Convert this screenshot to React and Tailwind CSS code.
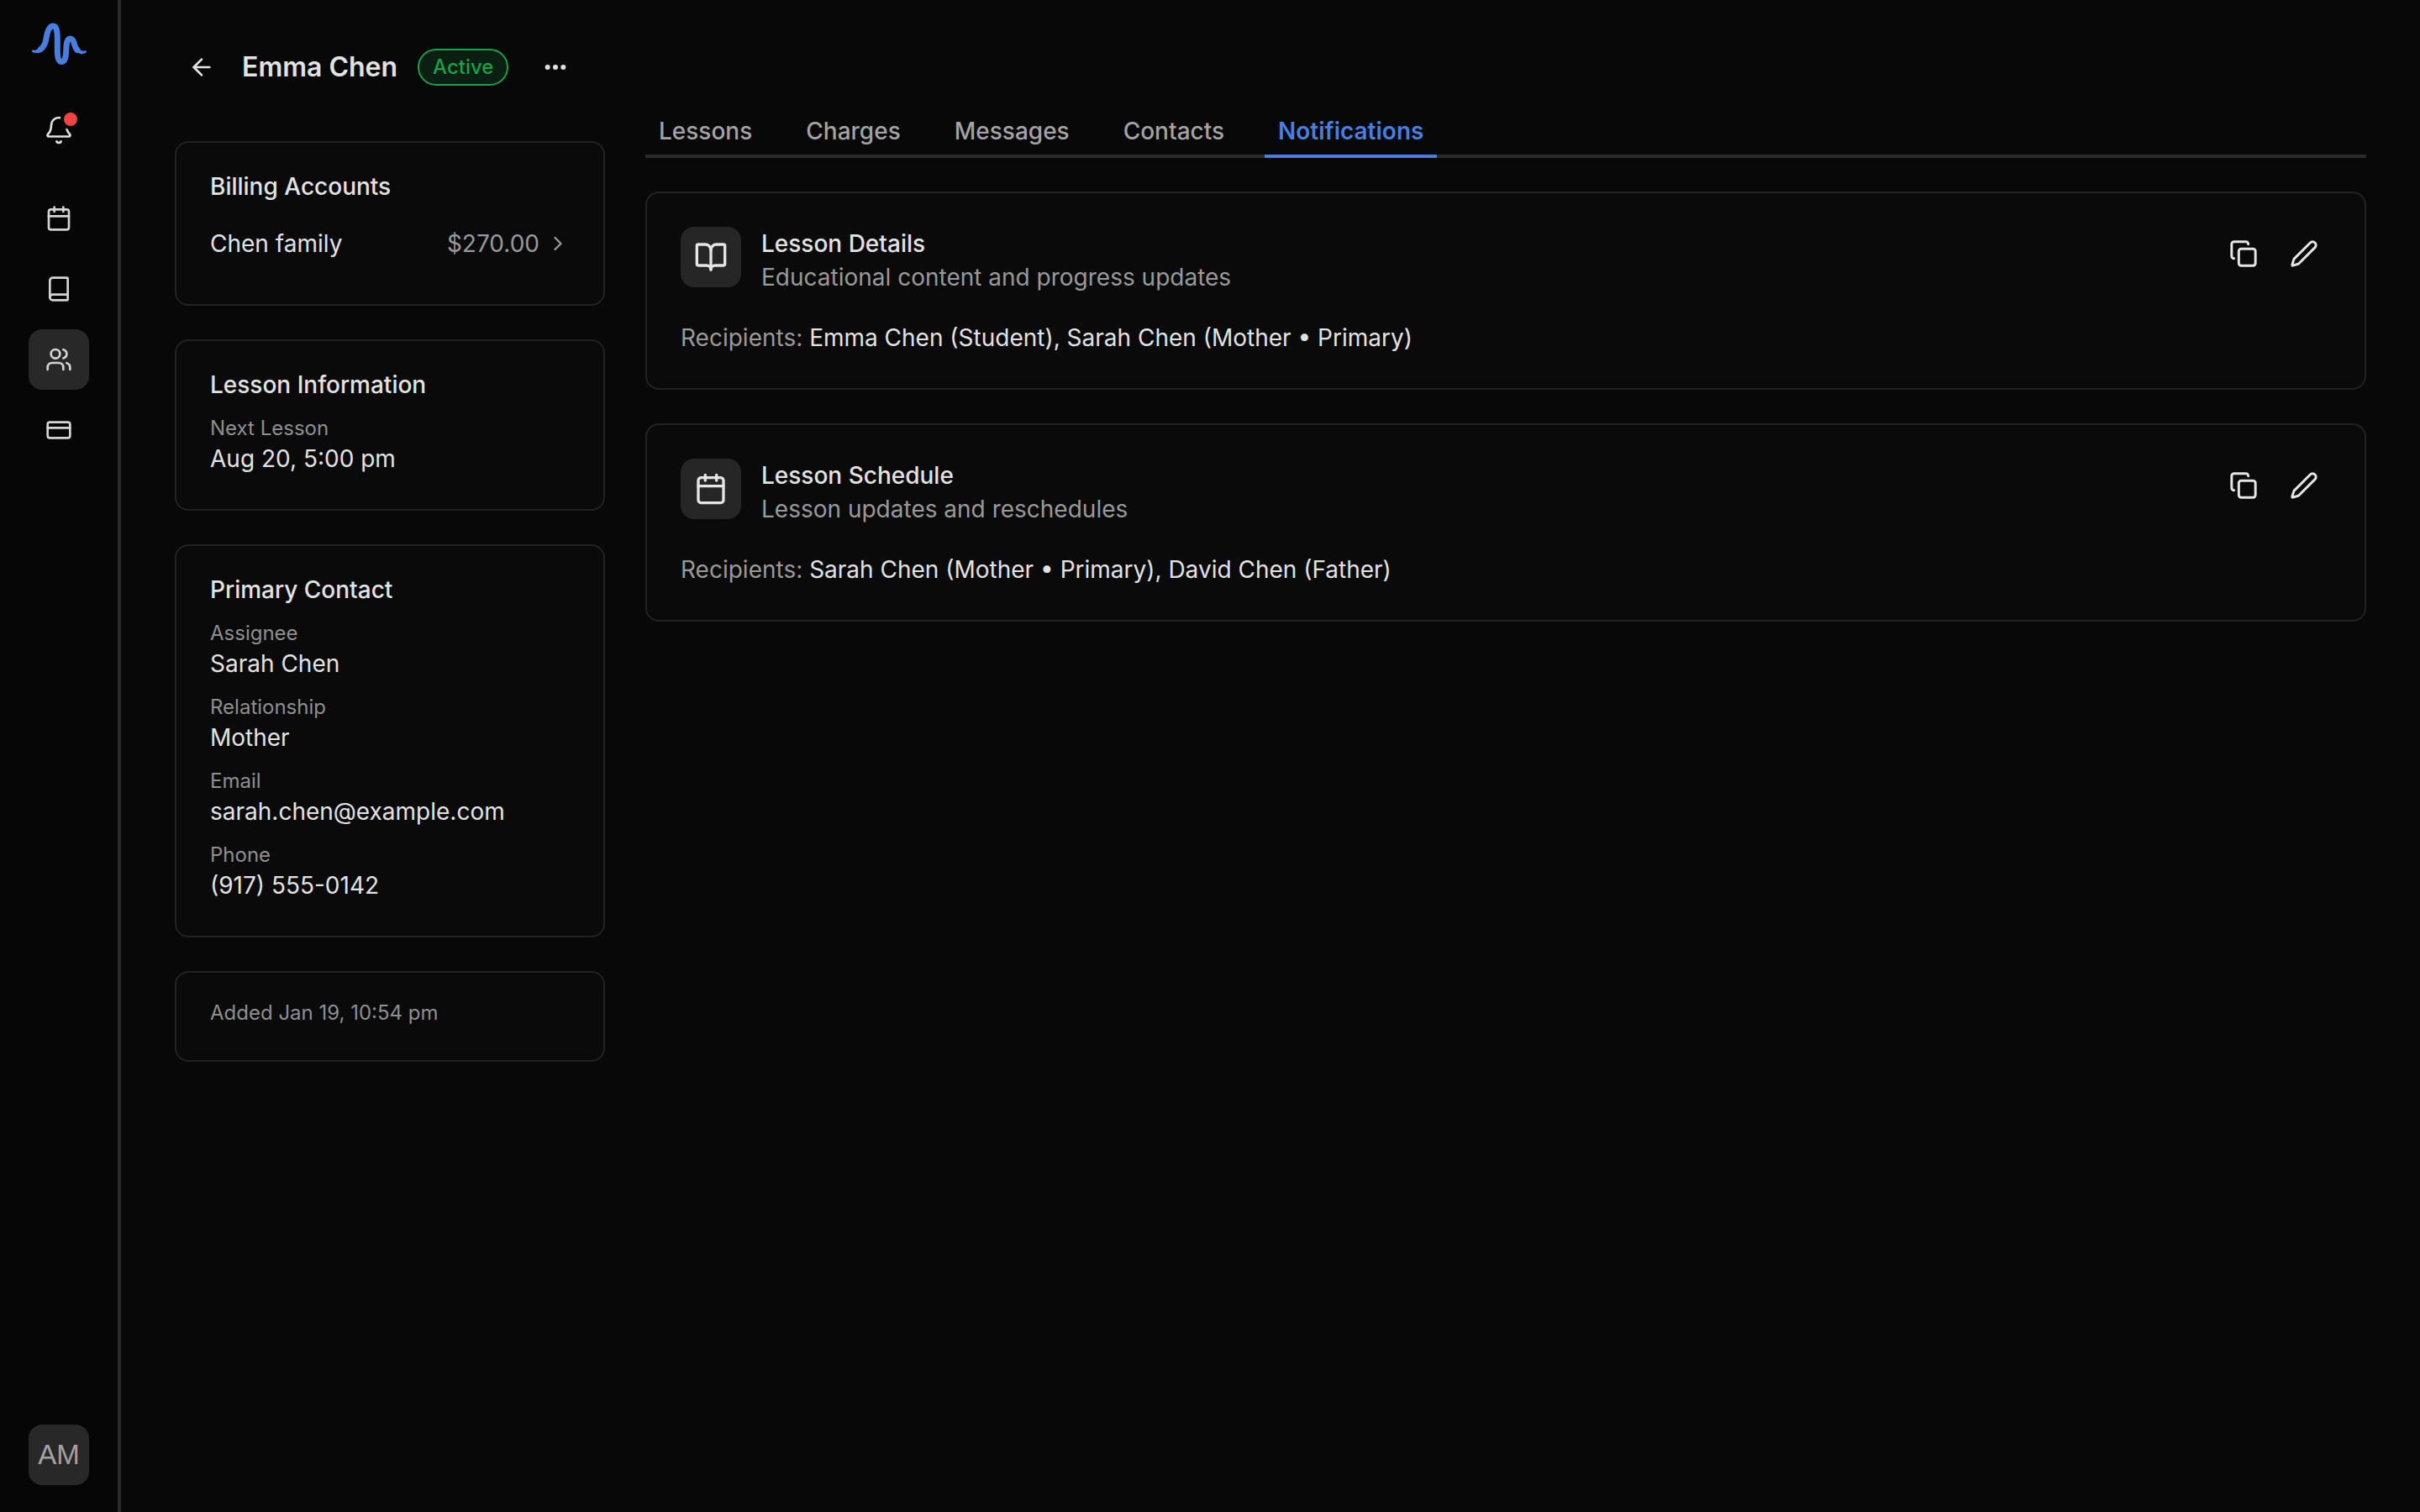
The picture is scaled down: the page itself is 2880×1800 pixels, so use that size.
import {
  ArrowLeft,
  Bell,
  Book,
  BookOpen,
  Calendar,
  ChevronRight,
  Copy,
  CreditCard,
  Ellipsis,
  Pen,
  Users,
} from "lucide-react";

const tabs = ["Lessons", "Charges", "Messages", "Contacts", "Notifications"];

const contactFields = [
  { label: "Assignee", value: "Sarah Chen" },
  { label: "Relationship", value: "Mother" },
  { label: "Email", value: "sarah.chen@example.com" },
  { label: "Phone", value: "(917) 555-0142" },
];

const notifications = [
  {
    title: "Lesson Details",
    description: "Educational content and progress updates",
    recipients: "Emma Chen (Student), Sarah Chen (Mother • Primary)",
    icon: BookOpen,
  },
  {
    title: "Lesson Schedule",
    description: "Lesson updates and reschedules",
    recipients: "Sarah Chen (Mother • Primary), David Chen (Father)",
    icon: Calendar,
  },
];

function Logo() {
  return (
    <svg width="72" height="72" viewBox="34 16 72 72" fill="none" stroke="#4a7de0" strokeLinecap="round">
      <path d="M39.5 60.8C43 62.3 46 61.5 48.5 59" strokeWidth="3" />
      <path d="M44 61C46 61 47.5 60.5 49.5 58.8" strokeWidth="4.5" />
      <path d="M101.5 61.7C98.5 63 96 62.8 93.5 61" strokeWidth="3" />
      <path d="M97 62.2C95 62 93.5 61 92 59.5" strokeWidth="4.5" />
      <path
        d="M48.5 58.5C52 56 54 52 55 46C56.5 36 59 31 63.3 31C67.5 31 68.3 37 68.3 48L68.3 62C68.5 70 70 73.5 73.5 73.5C77.5 73.5 78.5 68 78.8 58C79 50 80.5 46 83.5 46C86.5 46 87.8 49 88.8 53.5C89.5 56.5 90.5 58 92 59.5"
        strokeWidth="7"
      />
    </svg>
  );
}

function Sidebar() {
  return (
    <aside className="w-[144px] h-screen shrink-0 flex flex-col items-center bg-[#060606] border-r-4 border-[#2a2a2a] pt-4 pb-8">
      <Logo />
      <button className="relative w-[72px] h-[72px] mt-[31px] flex items-center justify-center text-[#e0e0e0]">
        <Bell size={36} strokeWidth={1.8} />
        <span className="absolute top-[15px] right-[14px] w-4 h-4 rounded-full bg-[#ef4444] ring-4 ring-[#060606]" />
      </button>
      <nav className="flex flex-col gap-3 mt-[33px] text-[#d4d4d4]">
        <button className="w-[72px] h-[72px] flex items-center justify-center rounded-2xl">
          <Calendar size={32} strokeWidth={2} />
        </button>
        <button className="w-[72px] h-[72px] flex items-center justify-center rounded-2xl">
          <Book size={32} strokeWidth={2} />
        </button>
        <button className="w-[72px] h-[72px] flex items-center justify-center rounded-2xl bg-[#282828]">
          <Users size={32} strokeWidth={2} />
        </button>
        <button className="w-[72px] h-[72px] flex items-center justify-center rounded-2xl">
          <CreditCard size={32} strokeWidth={2} />
        </button>
      </nav>
      <div className="mt-auto w-[72px] h-[72px] flex items-center justify-center rounded-2xl bg-[#282828] text-[#a3a3a3] text-[33px] font-['Liberation_Sans',sans-serif]">
        AM
      </div>
    </aside>
  );
}

function Card({ children }) {
  return (
    <div className="px-10 pt-8 pb-10 rounded-2xl border-2 border-[#222222] bg-[#0a0a0a]">
      {children}
    </div>
  );
}

function Field({ label, value }) {
  return (
    <div className="mt-4">
      <p className="text-2xl leading-8 text-[#8f8f8f]">{label}</p>
      <p className="text-[28px] leading-10 text-[#e2e2e2]">{value}</p>
    </div>
  );
}

function NotificationCard({ item }) {
  const Icon = item.icon;
  return (
    <div className="px-10 pt-10 pb-10 rounded-2xl border-2 border-[#222222] bg-[#0a0a0a]">
      <div className="flex items-start justify-between">
        <div className="flex items-start gap-6">
          <div className="w-[72px] h-[72px] flex items-center justify-center rounded-2xl bg-[#262626] text-[#e5e5e5]">
            <Icon size={40} strokeWidth={2} />
          </div>
          <div>
            <p className="text-[28px] leading-10 font-medium text-[#e2e2e2]">{item.title}</p>
            <p className="text-[28px] leading-10 text-[#999999]">{item.description}</p>
          </div>
        </div>
        <div className="flex gap-2 text-[#e5e5e5]">
          <button className="w-16 h-16 flex items-center justify-center">
            <Copy size={34} strokeWidth={2.1} />
          </button>
          <button className="w-16 h-16 flex items-center justify-center">
            <Pen size={34} strokeWidth={2.1} />
          </button>
        </div>
      </div>
      <p className="mt-8 text-[28px] leading-10 text-[#e2e2e2]">
        <span className="text-[#999999]">Recipients: </span>
        {item.recipients}
      </p>
    </div>
  );
}

export default function App() {
  return (
    <div className="flex h-screen bg-[#080808] font-['Inter',sans-serif]">
      <Sidebar />
      <main className="flex-1 flex gap-12 pl-16 pr-16 pt-12">
        <div className="w-[512px] shrink-0">
          <div className="flex items-center h-16 mb-14">
            <button className="w-16 h-16 flex items-center justify-center text-[#e5e5e5]">
              <ArrowLeft size={32} strokeWidth={2} />
            </button>
            <h1 className="ml-4 text-[32px] font-semibold text-[#e2e2e2]">Emma Chen</h1>
            <span className="ml-6 h-11 px-4 flex items-center rounded-full border-2 border-[#16a34a] bg-[#0b1f12] text-2xl font-medium text-[#16a34a]">
              Active
            </span>
            <button className="ml-6 w-16 h-16 flex items-center justify-center text-[#e5e5e5]">
              <Ellipsis size={32} strokeWidth={2.5} />
            </button>
          </div>
          <div className="flex flex-col gap-10">
            <Card>
              <h2 className="text-[28px] leading-10 font-medium text-[#e2e2e2]">Billing Accounts</h2>
              <div className="mt-4 py-3 flex items-center justify-between">
                <span className="text-[28px] leading-10 text-[#e2e2e2]">Chen family</span>
                <span className="flex items-center gap-2 text-[28px] leading-10 text-[#999999]">
                  $270.00
                  <ChevronRight size={28} strokeWidth={2} />
                </span>
              </div>
            </Card>
            <Card>
              <h2 className="text-[28px] leading-10 font-medium text-[#e2e2e2]">Lesson Information</h2>
              <Field label="Next Lesson" value="Aug 20, 5:00 pm" />
            </Card>
            <Card>
              <h2 className="text-[28px] leading-10 font-medium text-[#e2e2e2]">Primary Contact</h2>
              {contactFields.map((field) => (
                <Field key={field.label} label={field.label} value={field.value} />
              ))}
            </Card>
            <Card>
              <p className="text-2xl leading-8 text-[#8f8f8f]">Added Jan 19, 10:54 pm</p>
            </Card>
          </div>
        </div>
        <div className="flex-1 pt-[88px]">
          <div className="flex gap-8 border-b-4 border-[#2a2a2a]">
            {tabs.map((tab) => (
              <button
                key={tab}
                className={
                  tab === "Notifications"
                    ? "px-4 pb-2 -mb-1 border-b-4 border-[#4a7de0] text-[28px] leading-10 font-semibold text-[#4a7de0]"
                    : "px-4 pb-2 -mb-1 border-b-4 border-transparent text-[28px] leading-10 font-medium text-[#a3a3a3]"
                }
              >
                {tab}
              </button>
            ))}
          </div>
          <div className="mt-10 flex flex-col gap-10">
            {notifications.map((item) => (
              <NotificationCard key={item.title} item={item} />
            ))}
          </div>
        </div>
      </main>
    </div>
  );
}
